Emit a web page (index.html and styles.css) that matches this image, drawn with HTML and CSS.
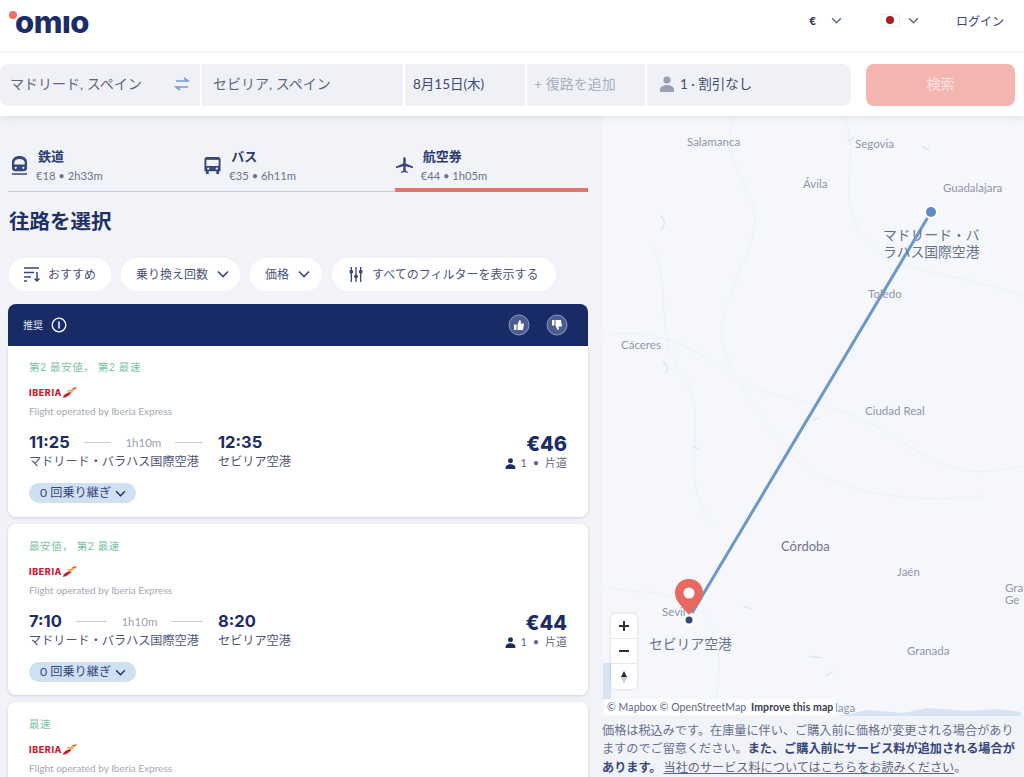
FILE: index.html
```html
<!DOCTYPE html>
<html lang="ja">
  <head>
    <meta name="viewport" content="width=device-width, initial-scale=1" />
    <link rel="stylesheet" href="styles.css">
  </head>
  <body>
    <svg class="sprite">
      <symbol id="chevron" viewBox="0 0 12 8"><path d="M1 1.500 6 6.500 11 1.500" fill="none" stroke="currentColor" stroke-width="1.600"/></symbol>
      <symbol id="person" viewBox="0 0 16 16"><circle cx="8" cy="4" r="3.600" fill="currentColor"/><path d="M1 16v-2.500C1 10.500 5 9 8 9s7 1.500 7 4.500V16z" fill="currentColor"/></symbol>
      <symbol id="iberia" viewBox="0 0 20 14"><path d="M1 13.500C3 8 8 6.500 12 6.800 10 10 6 13.800 1 13.500z" fill="#c8202f"/><path d="M5 6C8 3.500 12 3.800 15 4.200L13 6.200C10 5.500 7 5.500 5 6z" fill="#e8a01c"/><path d="M11 3.300C13 1.500 16 .6 19 .5 18 1.600 16.500 3 15.500 3.700 14 3.300 12.500 3.200 11 3.300z" fill="#e8531f"/></symbol>
    </svg>

    <header class="topbar">
      <div class="logo"><span class="logo-dot"></span>omıo</div>
      <div class="topbar-right">
        <span class="currency">€</span>
        <svg class="chev-thin"><use href="#chevron"/></svg>
        <span class="flag"><span></span></span>
        <svg class="chev-thin"><use href="#chevron"/></svg>
        <span class="login">ログイン</span>
      </div>
    </header>

    <div class="searchbar">
      <div class="fields">
        <div class="field field-from">
          <span>マドリード, スペイン</span>
          <svg class="swap" viewBox="0 0 16 14"><path d="M10 1l4 3H2M6 13l-4-3h12" fill="none" stroke="#6f9bcf" stroke-width="1.600"/></svg>
        </div>
        <div class="field field-to">セビリア, スペイン</div>
        <div class="field field-date">8月15日(木)</div>
        <div class="field field-return">+ 復路を追加</div>
        <div class="field field-pax">
          <svg class="pax-icon"><use href="#person"/></svg>
          <span>1 · 割引なし</span>
        </div>
      </div>
      <button class="search-btn">検索</button>
    </div>

    <main class="main">
      <section class="results">
        <nav class="tabs">
          <div class="tab">
            <svg class="tab-icon" viewBox="0 0 18 22"><path d="M9 1C4 1 1 3.500 1 8v6c0 2 1.500 3 3 3h10c1.500 0 3-1 3-3V8c0-4.500-3-7-8-7z" fill="#36477a"/><path d="M3.500 7.500C4 5 6 4 9 4s5 1 5.500 3.500V10h-11z" fill="#f1f3f8"/><circle cx="5" cy="13.500" r="1.200" fill="#f1f3f8"/><circle cx="13" cy="13.500" r="1.200" fill="#f1f3f8"/><path d="M1 20h16" stroke="#36477a" stroke-width="1.600"/></svg>
            <div>
              <div class="tab-name">鉄道</div>
              <div class="tab-info">€18 • 2h33m</div>
            </div>
          </div>
          <div class="tab">
            <svg class="tab-icon" viewBox="0 0 18 20"><path d="M3 1h12c1.500 0 2.500 1 2.500 2.500V16h-1.500v3h-3v-3H5v3H2v-3H.5V3.500C.5 2 1.500 1 3 1z" fill="#36477a"/><rect x="2.500" y="4" width="13" height="6.500" fill="#f1f3f8"/><circle cx="4.500" cy="13.300" r="1.200" fill="#f1f3f8"/><circle cx="13.500" cy="13.300" r="1.200" fill="#f1f3f8"/></svg>
            <div>
              <div class="tab-name">バス</div>
              <div class="tab-info">€35 • 6h11m</div>
            </div>
          </div>
          <div class="tab tab-active">
            <svg class="tab-icon" viewBox="0 0 18 18"><path d="M9 0c.9 0 1.300 1.200 1.300 2.500v4.300L18 10v1.800l-7.700-2v4.400l2.200 1.800V17L9 16l-3.500 1v-1l2.200-1.800V9.800L0 11.800V10l7.700-3.200V2.500C7.700 1.200 8.100 0 9 0z" fill="#36477a"/></svg>
            <div>
              <div class="tab-name">航空券</div>
              <div class="tab-info">€44 • 1h05m</div>
            </div>
          </div>
        </nav>

        <h1 class="title">往路を選択</h1>

        <div class="filters">
          <div class="pill pill-sort">
            <svg class="pill-icon" viewBox="0 0 16 15"><path d="M0 1h15M0 5.500h10M0 10h7M0 14h3M13 5v9M10.500 11.500 13 14l2.500-2.500" fill="none" stroke="#36477a" stroke-width="1.500"/></svg>
            おすすめ
          </div>
          <div class="pill pill-stops">乗り換え回数<svg class="chev"><use href="#chevron"/></svg></div>
          <div class="pill pill-price">価格<svg class="chev"><use href="#chevron"/></svg></div>
          <div class="pill pill-all">
            <svg class="pill-icon" viewBox="0 0 14 16"><path d="M2 0v16M7 0v16M12 0v16" stroke="#36477a" stroke-width="1.400"/><circle cx="2" cy="5" r="2" fill="#36477a"/><circle cx="7" cy="10" r="2" fill="#36477a"/><circle cx="12" cy="5" r="2" fill="#36477a"/></svg>
            すべてのフィルターを表示する
          </div>
        </div>

        <div class="reco-head">
          <span class="reco-label">推奨</span>
          <svg class="info" viewBox="0 0 16 16"><circle cx="8" cy="8" r="6.800" fill="none" stroke="#fff" stroke-width="1.300"/><path d="M8 4.500v7" stroke="#fff" stroke-width="1.500"/></svg>
          <span class="reco-space"></span>
          <svg class="thumb" viewBox="0 0 22 22"><circle cx="11" cy="11" r="10" fill="#4a5c92" stroke="#8a98bf"/><path d="M6 10.500h2.500V16H6zM9.500 10.500l2-4.500c1.200 0 1.500 1 1.300 2l-.3 1.500H16l-1 6.500H9.500z" fill="#fff"/></svg>
          <svg class="thumb" viewBox="0 0 22 22"><circle cx="11" cy="11" r="10" fill="#4a5c92" stroke="#8a98bf"/><path d="M6 6h2.500v5.500H6zM9.500 6H15l1 6.500h-3.500l.3 1.500c.2 1-.1 2-1.300 2l-2-4.500z" fill="#fff"/></svg>
        </div>

        <article class="card card-first">
          <div class="tag">第2 最安値， 第2 最速</div>
          <div class="airline"><span class="airline-name">IBERIA</span><svg class="airline-tail"><use href="#iberia"/></svg></div>
          <div class="operated">Flight operated by Iberia Express</div>
          <div class="flight">
            <div class="times">
              <div class="dep-row">
                <span class="time">11:25</span><span class="rule"></span><span class="dur">1h10m</span><span class="rule"></span>
              </div>
              <span class="time">12:35</span>
              <span class="station">マドリード・バラハス国際空港</span>
              <span class="station">セビリア空港</span>
            </div>
            <div class="fare">
              <div class="price">€46</div>
              <div class="fare-note"><svg class="fare-icon"><use href="#person"/></svg>1 • 片道</div>
            </div>
          </div>
          <div class="stops">0 回乗り継ぎ<svg class="chev-small"><use href="#chevron"/></svg></div>
        </article>

        <article class="card">
          <div class="tag">最安値， 第2 最速</div>
          <div class="airline"><span class="airline-name">IBERIA</span><svg class="airline-tail"><use href="#iberia"/></svg></div>
          <div class="operated">Flight operated by Iberia Express</div>
          <div class="flight">
            <div class="times">
              <div class="dep-row">
                <span class="time">7:10</span><span class="rule"></span><span class="dur">1h10m</span><span class="rule"></span>
              </div>
              <span class="time">8:20</span>
              <span class="station">マドリード・バラハス国際空港</span>
              <span class="station">セビリア空港</span>
            </div>
            <div class="fare">
              <div class="price">€44</div>
              <div class="fare-note"><svg class="fare-icon"><use href="#person"/></svg>1 • 片道</div>
            </div>
          </div>
          <div class="stops">0 回乗り継ぎ<svg class="chev-small"><use href="#chevron"/></svg></div>
        </article>

        <article class="card">
          <div class="tag">最速</div>
          <div class="airline"><span class="airline-name">IBERIA</span><svg class="airline-tail"><use href="#iberia"/></svg></div>
          <div class="operated">Flight operated by Iberia Express</div>
        </article>
      </section>

      <aside class="side">
        <div class="map">
          <svg class="map-art" viewBox="0 0 421 600">
            <g fill="none" stroke="#edf1f7" stroke-width="1">
              <path d="M0 470c30 10 60 0 90 20s30 60 20 110"/>
              <path d="M130 0c-10 40 10 60 20 90s-20 70-30 110 30 90 60 130 110 60 200 50"/>
              <path d="M240 0c20 40-10 80 20 120s70 30 161 60"/>
              <path d="M0 220c50-10 90 10 130 40s100 20 160 60 80 40 131 30"/>
              <path d="M50 130c20 50 0 90 30 130s-10 100 30 150"/>
            </g>
            <g fill="none" stroke="#dbe7f4" stroke-width="1.500">
              <path d="M58 100l4 6-3 8M318 30l8 4M245 25l6-3M60 245l5 6-2 6M90 330l6 4M210 305l6-4M140 490l8 3M206 540l12 2M222 560l8-4M190 600l4-8"/>
            </g>
            <path d="M0 547h8v37H0z" fill="#d6e4f3"/>
            <path d="M235 600l30-6 35 3 25-5 40 3 30-2 23 3v4z" fill="#d6e4f3"/>
            <path d="M328 96 89 497" stroke="#6c97c9" stroke-width="3" fill="none"/>
            <circle cx="328" cy="96" r="7" fill="#fff"/>
            <circle cx="328" cy="96" r="5" fill="#5d8ac3"/>
            <circle cx="86" cy="504" r="6" fill="#fff"/>
            <circle cx="86" cy="504" r="3.500" fill="#36477a"/>
          </svg>

          <span class="place" style="left:84px;top:19px">Salamanca</span>
          <span class="place" style="left:252px;top:21px">Segovia</span>
          <span class="place" style="left:200px;top:61px">Ávila</span>
          <span class="place" style="left:340px;top:65px">Guadalajara</span>
          <span class="place" style="left:265px;top:171px">Toledo</span>
          <span class="place" style="left:18px;top:222px">Cáceres</span>
          <span class="place" style="left:262px;top:288px">Ciudad Real</span>
          <span class="place place-big" style="left:178px;top:423px">Córdoba</span>
          <span class="place" style="left:294px;top:449px">Jaén</span>
          <span class="place" style="left:304px;top:528px">Granada</span>
          <span class="place" style="left:402px;top:465px">Gra</span>
          <span class="place" style="left:402px;top:477px">Ge</span>
          <span class="place" style="left:59px;top:489px">Sevil</span>
          <span class="place" style="left:232px;top:585px">laga</span>

          <div class="airport airport-mad">マドリード・バ<br>ラハス国際空港</div>
          <div class="airport airport-svq">セビリア空港</div>

          <svg class="pin" viewBox="0 0 28 36"><path d="M14 0C6 0 0 6 0 14c0 9 9 15 14 22 5-7 14-13 14-22C28 6 22 0 14 0z" fill="#e8685f"/><circle cx="14" cy="14" r="5.500" fill="#fff"/></svg>

          <div class="zoom-ctrl">
            <div class="zoom-btn">
              <svg viewBox="0 0 12 12"><path d="M6 1v10M1 6h10" stroke="#2b2f38" stroke-width="2"/></svg>
            </div>
            <div class="zoom-btn">
              <svg viewBox="0 0 12 12"><path d="M1 6h10" stroke="#2b2f38" stroke-width="2"/></svg>
            </div>
            <div class="zoom-btn">
              <svg viewBox="0 0 12 16"><path d="M6 1l3.500 7h-7z" fill="#2b2f38"/><path d="M6 15l3.500-7h-7z" fill="#c8ccd3"/></svg>
            </div>
          </div>

          <div class="attrib">© Mapbox © OpenStreetMap <b>Improve this map</b></div>
        </div>
        <p class="note">価格は税込みです。在庫量に伴い、ご購入前に価格が変更される場合があり<br>ますのでご留意ください。<b>また、ご購入前にサービス料が追加される場合が</b><br><b>あります。</b><a href="#">当社のサービス料についてはこちらをお読みください</a>。</p>
      </aside>
    </main>
  </body>
</html>
```

FILE: styles.css
```css
* {
  box-sizing: border-box;
}

html,
body {
  height: 777px;
  overflow: hidden;
}

body {
  margin: 0;
  background: #fff;
  color: #1b2c66;
  font-family: Lato, "Noto Sans CJK JP", sans-serif;
}

.sprite {
  display: none;
}

/* top bar */
.topbar {
  height: 53px;
  display: flex;
  align-items: center;
  justify-content: space-between;
  padding: 0 20px 8px 15px;
  border-bottom: 1px solid #f8f9fb;
}

.logo {
  position: relative;
  font-family: Inter, sans-serif;
  font-weight: 800;
  font-size: 31px;
  line-height: 30px;
  letter-spacing: -0.5px;
  color: #1b2c66;
}

.logo-dot {
  position: absolute;
  left: -6px;
  top: 4px;
  width: 8px;
  height: 8px;
  border-radius: 50%;
  background: #e8716a;
}

.topbar-right {
  display: flex;
  align-items: center;
  padding-bottom: 4px;
}

.currency {
  font-size: 11px;
  font-weight: 700;
  margin-right: 15px;
}

.chev-thin {
  width: 11px;
  height: 7px;
  color: #5a6488;
}

.flag {
  width: 19px;
  height: 13px;
  margin-left: 39px;
  margin-right: 8px;
  border: 1px solid #eceef3;
  display: flex;
  align-items: center;
  justify-content: center;
}

.flag span {
  width: 8px;
  height: 8px;
  border-radius: 50%;
  background: #a81c24;
}

.login {
  margin-left: 37px;
  font-size: 12px;
  color: #36477a;
}

/* search */
.searchbar {
  position: relative;
  z-index: 2;
  height: 63px;
  display: flex;
  gap: 15px;
  padding: 11px 9px 10px 0;
  background: #fff;
  box-shadow: 0 2px 8px rgba(40, 50, 90, 0.1);
}

.fields {
  width: 851px;
  display: flex;
  gap: 2px;
}

.field {
  display: flex;
  align-items: center;
  background: #eff1f6;
  font-size: 14px;
  color: #5d6785;
  padding-left: 10px;
  padding-bottom: 5px;
}

.field-from {
  width: 200px;
  justify-content: space-between;
  padding-right: 10px;
  border-radius: 8px 0 0 8px;
}

.field-to {
  width: 201px;
  padding-left: 11px;
}

.field-date {
  width: 120px;
  padding-left: 8px;
  color: #414c72;
  font-size: 13.500px;
}

.field-return {
  width: 118px;
  padding-left: 7px;
  color: #a9aebf;
}

.field-pax {
  flex: 1;
  padding-left: 12px;
  border-radius: 0 8px 8px 0;
  color: #414c72;
  font-size: 13.500px;
}

.swap {
  width: 16px;
  height: 14px;
  margin-top: 3px;
}

.pax-icon {
  width: 16px;
  height: 16px;
  margin-right: 5px;
  margin-top: 3px;
  color: #9a9fb4;
}

.search-btn {
  width: 149px;
  padding: 0 0 5px;
  border: none;
  border-radius: 8px;
  background: #f4b4b0;
  color: #fbe3e1;
  font-size: 14px;
  font-family: inherit;
}

/* left column */
.main {
  display: flex;
  height: 661px;
  background: #f1f3f8;
}

.results {
  flex: none;
  width: 603px;
  padding: 0 15px 0 8px;
  overflow: hidden;
}

.tabs {
  display: grid;
  grid-template-columns: repeat(3, 1fr);
  height: 76px;
  padding-top: 31px;
  border-bottom: 1px solid #c9ccd4;
}

.tab {
  display: flex;
  gap: 10px;
  padding-left: 3px;
  margin-bottom: -1px;
}

.tab-active {
  border-bottom: 4px solid #e8716a;
  padding-left: 1px;
}

.tab-icon {
  width: 17px;
  height: 21px;
  margin-top: 8px;
}

.tab-name {
  font-size: 13px;
  line-height: 18px;
  font-weight: 700;
  color: #2b3b6e;
}

.tab-info {
  margin-top: 3px;
  font-size: 11.200px;
  line-height: 16px;
  color: #6a7490;
  margin-left: -2px;
}

.title {
  margin: 15px 0 0 1px;
  font-size: 20.500px;
  line-height: 28px;
  font-weight: 700;
  color: #1f3068;
}

.filters {
  display: flex;
  gap: 10px;
  margin: 23px 0 0 1px;
}

.pill {
  height: 33px;
  display: flex;
  align-items: center;
  padding-bottom: 3px;
  background: #fff;
  border-radius: 17px;
  font-size: 12px;
  color: #4a5478;
}

.pill-sort {
  width: 102px;
  padding-left: 15px;
  gap: 8px;
}

.pill-stops {
  width: 119px;
  padding-left: 15px;
}

.pill-price {
  width: 72px;
  padding-left: 15px;
}

.pill-all {
  width: 224px;
  padding-left: 16px;
  gap: 8px;
}

.pill-icon {
  width: 16px;
  height: 15px;
  margin-top: 2px;
}

.chev {
  width: 12px;
  height: 8px;
  margin-left: 9px;
  margin-top: 2px;
  color: #36477a;
}

.reco-head {
  height: 42px;
  margin-top: 13px;
  display: flex;
  align-items: center;
  padding: 0 20px 0 15px;
  background: #182b66;
  border-radius: 8px 8px 0 0;
  color: #dfe3ee;
}

.reco-label {
  font-size: 10px;
  padding-bottom: 2px;
}

.info {
  width: 16px;
  height: 16px;
  margin-left: 8px;
}

.reco-space {
  flex: 1;
}

.thumb {
  width: 22px;
  height: 22px;
  margin-left: 16px;
}

/* cards */
.card {
  height: 171px;
  margin-bottom: 7px;
  padding: 15px 21px 0;
  background: #fff;
  border-radius: 8px;
  box-shadow: 0 1px 3px rgba(40, 50, 90, 0.18);
}

.card-first {
  border-radius: 0 0 8px 8px;
  padding-top: 14px;
}

.tag {
  font-size: 10.500px;
  line-height: 14px;
  letter-spacing: 0.6px;
  color: #7cc4a4;
}

.airline {
  display: flex;
  align-items: center;
  height: 13px;
  margin-top: 12px;
}

.airline-name {
  font-family: Inter, sans-serif;
  font-size: 9px;
  font-weight: 800;
  letter-spacing: 0.6px;
  color: #c8202f;
}

.airline-tail {
  width: 16px;
  height: 13px;
}

.operated {
  margin-top: 5px;
  font-size: 10px;
  line-height: 14px;
  color: #a4a9b8;
}

.flight {
  display: flex;
  justify-content: space-between;
  margin-top: 15px;
}

.times {
  display: grid;
  grid-template-columns: 189px auto;
}

.dep-row {
  display: flex;
  align-items: center;
  padding-right: 15px;
}

.time {
  font-family: Inter, sans-serif;
  font-size: 16.500px;
  line-height: 19px;
  font-weight: 700;
}

.rule {
  flex: 1;
  height: 1px;
  margin: 0 0 0 14px;
  background: #c9ccd4;
}

.dur {
  margin-left: 14px;
  font-size: 11.500px;
  color: #9aa0b3;
}

.station {
  font-size: 12.150px;
  line-height: 17px;
  color: #4a5478;
}

.fare {
  text-align: right;
}

.price {
  font-family: Inter, sans-serif;
  font-size: 20px;
  line-height: 22px;
  font-weight: 800;
}

.fare-note {
  display: flex;
  align-items: center;
  justify-content: flex-end;
  margin-top: 1px;
  font-size: 11px;
  line-height: 14px;
  word-spacing: 3px;
  color: #5d6785;
}

.fare-icon {
  width: 11px;
  height: 11px;
  margin-right: 5px;
  color: #1b2c66;
}

.stops {
  display: inline-flex;
  align-items: center;
  height: 20px;
  margin-top: 13px;
  padding: 0 10px 3px 11px;
  background: #cfe0f3;
  border-radius: 10px;
  font-size: 12.200px;
  color: #36477a;
}

.chev-small {
  width: 11px;
  height: 7px;
  margin-left: 4px;
  margin-top: 3px;
  color: #1b2c66;
}

/* map */
.side {
  flex: none;
  width: 421px;
  display: flex;
  flex-direction: column;
}

.map {
  position: relative;
  height: 600px;
  background: #f5f7fc;
  overflow: hidden;
}

.map-art {
  position: absolute;
  inset: 0;
  width: 421px;
  height: 600px;
}

.place {
  position: absolute;
  font-size: 11.500px;
  line-height: 14px;
  color: #8f96aa;
  white-space: nowrap;
}

.place-big {
  font-size: 13px;
  color: #6e768f;
}

.airport {
  position: absolute;
  font-size: 13.800px;
  line-height: 17px;
  color: #68718d;
}

.airport-mad {
  left: 280px;
  top: 110px;
}

.airport-svq {
  left: 46px;
  top: 519px;
}

.pin {
  position: absolute;
  left: 72px;
  top: 463px;
  width: 28px;
  height: 36px;
}

.zoom-ctrl {
  position: absolute;
  left: 8px;
  top: 498px;
  width: 26px;
  background: #fff;
  border-radius: 4px;
  box-shadow: 0 0 3px rgba(40, 50, 90, 0.2);
}

.zoom-btn {
  height: 25px;
  display: flex;
  align-items: center;
  justify-content: center;
  border-bottom: 1px solid #e6e8ee;
}

.zoom-btn:last-child {
  border-bottom: none;
}

.zoom-btn svg {
  width: 12px;
  height: 14px;
}

.attrib {
  position: absolute;
  left: 1px;
  bottom: 1px;
  padding: 1px 3px;
  background: rgba(255, 255, 255, 0.7);
  font-size: 10.500px;
  line-height: 14px;
  letter-spacing: 0.1px;
  color: #5d6785;
}

.attrib b {
  color: #3a3f4c;
  margin-left: 2px;
}

.note {
  margin: 6px 0 0 -1px;
  width: 421px;
  font-size: 12.150px;
  line-height: 18.500px;
  color: #66708c;
}

.note b {
  color: #36477a;
}

.note a {
  margin-left: 2px;
  color: #5d6785;
}
```
